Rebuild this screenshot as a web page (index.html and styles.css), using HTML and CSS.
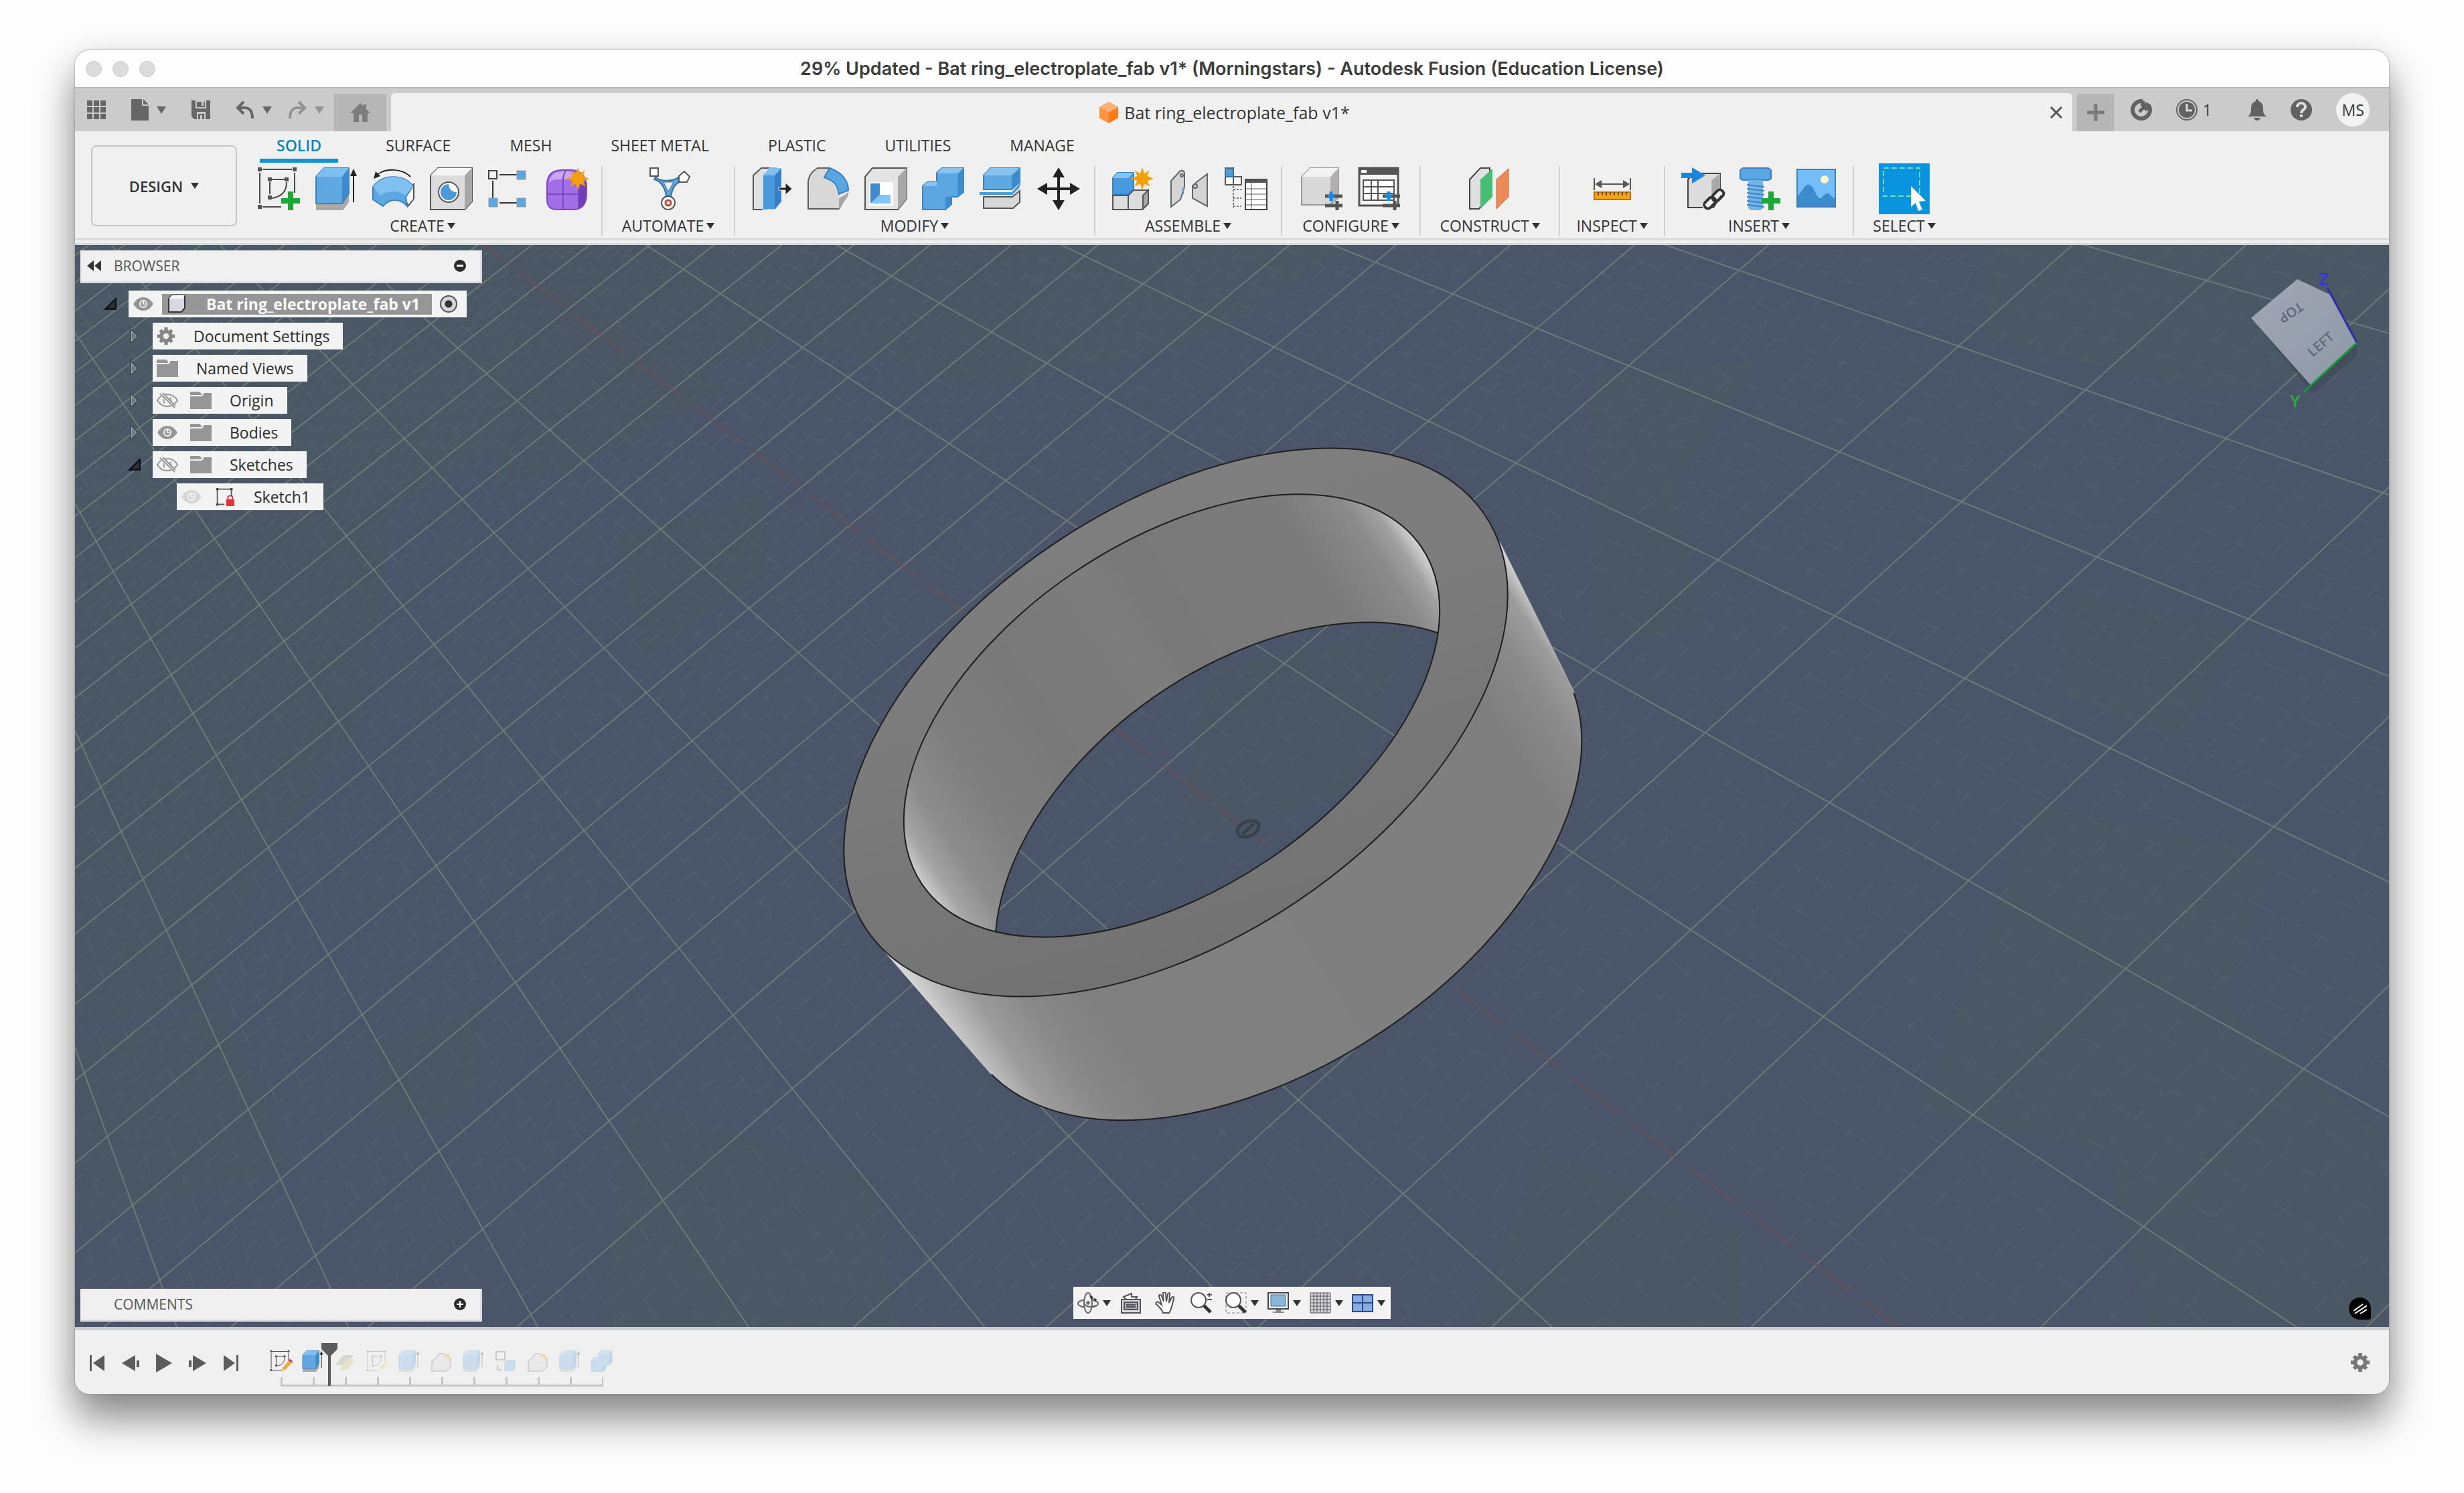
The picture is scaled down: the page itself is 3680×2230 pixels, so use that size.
FILE: index.html
```html
<!DOCTYPE html>
<html lang="en">

<head>
    <meta charset="UTF-8">
    <meta name="viewport" content="width=device-width, initial-scale=1.0">
    <title>Bat ring_electroplate_fab v1* - Autodesk Fusion</title>
    <link rel="stylesheet" href="styles.css">
</head>

<body>
    <!-- shared icons -->
    <svg class="sprites" width="0" height="0" aria-hidden="true">
        <symbol id="eye" viewBox="0 0 32 24">
            <path d="M1 12C6 4 11 2 16 2s10 2 15 10c-5 8-10 10-15 10S6 20 1 12z" fill="#969696" />
            <circle cx="16" cy="12" r="6" fill="#f0f0f0" />
            <circle cx="16" cy="12" r="4" fill="#969696" />
            <path d="M16 8v4h3" stroke="#f0f0f0" stroke-width="2" fill="none" />
        </symbol>
        <symbol id="eye-off" viewBox="0 0 32 24">
            <path d="M1 12C6 4 11 3 16 3s10 1 15 9c-5 8-10 9-15 9S6 20 1 12z" fill="none" stroke="#969696" stroke-width="2" />
            <path d="M12 16a6 6 0 0 1 0-8M20 8a6 6 0 0 1 0 8" fill="none" stroke="#969696" stroke-width="2" />
            <path d="M6 1l22 21" stroke="#f0f0f0" stroke-width="6" />
            <path d="M5 2l22 21M9 1l19 19" stroke="#969696" stroke-width="2" />
        </symbol>
        <symbol id="folder" viewBox="0 0 32 26">
            <path d="M0 0h14l3 3v2H0zM0 7h18l3-5h11v24H0z" fill="#969696" />
        </symbol>
        <symbol id="gear" viewBox="0 0 32 32">
            <g stroke-width="6" stroke="currentColor">
                <path d="M16 1v30M1 16h30M6 6l20 20M26 6L6 26" />
            </g>
            <circle cx="16" cy="16" r="11" fill="currentColor" />
            <circle cx="16" cy="16" r="5" fill="#f0f0f0" />
        </symbol>
        <symbol id="open" viewBox="0 0 20 20">
            <path d="M18 3v14H4z" fill="#2c3336" stroke="#0c0c0e" stroke-width="2" />
        </symbol>
        <symbol id="closed" viewBox="0 0 20 24">
            <path d="M4 2h3l9 10-9 10H4z" fill="#6a777c" stroke="#20282c" stroke-width="1" />
            <path d="M6 4l8 8-8 8z" fill="none" stroke="#a8b4b8" stroke-width="1" />
        </symbol>
        <symbol id="sketch" viewBox="0 0 64 64">
            <path d="M8 3h44M4 8v46M56 8v30M8 59h28" stroke="#4a4a4a" stroke-width="2" fill="none" />
            <path d="M22 18h20M19 22v18M44 22c0 14-8 22-22 24" stroke="#4a4a4a" stroke-width="2" fill="none" />
            <path d="M1 0h6v6H1zM53 0h6v6h-6zM1 56h6v6H1zM16 15h6v6h-6zM41 15h6v6h-6zM16 42h6v6h-6z" fill="#555" />
        </symbol>
        <symbol id="extrude" viewBox="0 0 64 64">
            <path d="M2 52h40l9-12v12l-9 12H2z" fill="#a9a9a9" />
            <path d="M2 14L14 1h37v38L41 54H2z" fill="#60a8e2" stroke="#3a82c0" stroke-width="2" />
            <path d="M2 14L14 1h37L41 14z" fill="#7dbff0" />
            <path d="M41 14L51 1v38L41 54z" fill="#3c8ccd" />
            <path d="M58 12v40" stroke="#222" stroke-width="2" />
            <path d="M58 2l5 11H53z" fill="#222" />
        </symbol>
        <symbol id="fillet" viewBox="0 0 64 64">
            <path d="M2 62V24C2 12 8 6 16 1h18c20 10 27 22 27 38L48 62z" fill="#d8d8d8" stroke="#606060" stroke-width="2" />
            <path d="M48 62c2-20 1-34-22-47l8-14c20 9 28 23 27 39z" fill="#f0f0f0" />
            <path d="M48 40c-2-14-8-20-22-25l8-14c20 7 28 20 28 33z" fill="#58a6e2" stroke="#3a82c0" stroke-width="2" />
            <path d="M48 62V46l13-8v6z" fill="#a8a8a8" />
        </symbol>
        <symbol id="combine" viewBox="0 0 64 64">
            <path d="M1 28l8-7h13V8l8-7h32v36l-9 7H44v11l-9 8H1z" fill="#5ca6e2" stroke="#3a82c0" stroke-width="2" />
            <path d="M22 8l8-7h32l-8 8H22zM1 28l8-7h13v7z" fill="#86c3f2" />
            <path d="M54 9l8-8v36l-9 7zM44 44v11l-9 8V44z" fill="#3c8ccd" />
        </symbol>
        <symbol id="star" viewBox="0 0 32 32">
            <path d="M16 0l3 9 7-5-3 8 9 4-9 3 4 8-8-4-3 9-3-9-8 4 4-8-9-3 9-4-4-8 8 5z" fill="#f5a000" />
        </symbol>
        <symbol id="plus" viewBox="0 0 28 28">
            <path d="M10 0h8v10h10v8H18v10h-8V18H0v-8h10z" fill="#1ea838" />
        </symbol>
        <symbol id="eq" viewBox="0 0 28 32">
            <path d="M0 10h26M0 24h26M18 17v14" stroke="#555" stroke-width="5" />
            <path d="M9 3v14M4 10h10" stroke="#1a8ae8" stroke-width="5" />
        </symbol>
    </svg>

    <main class="window">
        <header class="titlebar">
            <div class="lights"><i></i><i></i><i></i></div>
            <h1>29% Updated - Bat ring_electroplate_fab v1* (Morningstars) - Autodesk Fusion (Education License)</h1>
        </header>

        <div class="appbar">
            <div class="quick">
                <button aria-label="Data panel"><svg width="28" height="28" viewBox="0 0 28 28" fill="#666"><path d="M0 0h8v8H0zM10 0h8v8h-8zM20 0h8v8h-8zM0 10h8v8H0zM10 10h8v8h-8zM20 10h8v8h-8zM0 20h8v8H0zM10 20h8v8h-8zM20 20h8v8h-8z" /></svg></button>
                <button aria-label="File"><svg width="26" height="32" viewBox="0 0 26 32" fill="#666"><path d="M0 0h16v10h10v22H0zM18 0l8 8h-8z" /></svg><span class="caret"></span></button>
                <button aria-label="Save"><svg width="28" height="28" viewBox="0 0 28 28"><path d="M0 0h28v28H4l-4-4z" fill="#666" /><path d="M6 0h16v12H6zM8 17h13v11H8z" fill="#cbcbcb" /><path d="M8 2h12v8H8zM10 20h9v8h-9z" fill="#666" /><path d="M13 22h3v6h-3zM15 2h3v6h-3z" fill="#cbcbcb" /></svg></button>
                <button aria-label="Undo"><svg width="28" height="28" viewBox="0 0 28 28" fill="none" stroke="#666" stroke-width="4"><path d="M12 2L3 11l9 9M3 11h10c9 0 12 6 12 16" /></svg><span class="caret"></span></button>
                <button class="dim" aria-label="Redo"><svg width="28" height="28" viewBox="0 0 28 28" fill="none" stroke="#666" stroke-width="4"><path d="M16 2l9 9-9 9M25 11H15C6 11 3 17 3 27" /></svg><span class="caret"></span></button>
            </div>
            <button class="home" aria-label="Home"><svg width="30" height="28" viewBox="0 0 30 28" fill="#7c7c7c"><path d="M15 0l5 5V2h4v7l6 6h-4v13h-8V17h-5v11H5V15H0z" /></svg></button>
            <div class="doctab">
                <svg width="30" height="32" viewBox="0 0 30 32"><path d="M15 0l14 8v16l-14 8L1 24V8z" fill="#ff7a14" /><path d="M15 0l14 8-14 8L1 8z" fill="#ffb277" /><path d="M1 8l14 8v16L1 24z" fill="#ff9440" /></svg>
                <span>Bat ring_electroplate_fab v1*</span>
                <button class="close" aria-label="Close tab"><svg width="20" height="20" viewBox="0 0 20 20" stroke="#555" stroke-width="3"><path d="M2 2l16 16M18 2L2 18" /></svg></button>
            </div>
            <button class="newtab" aria-label="New design"><svg width="26" height="26" viewBox="0 0 26 26" stroke="#7a7a7a" stroke-width="5"><path d="M13 0v26M0 13h26" /></svg></button>
            <div class="account">
                <button aria-label="Extensions"><svg width="32" height="32" viewBox="0 0 32 32"><circle cx="16" cy="16" r="13" fill="none" stroke="#626262" stroke-width="6" /><path d="M18 0h14v8l-6-1-9 12-6-4 7-8z" fill="#cbcbcb" /><path d="M13 19L26 6M17 11l3-8M21 16l7-4" stroke="#626262" stroke-width="5" /></svg></button>
                <button aria-label="Job status"><svg width="32" height="32" viewBox="0 0 32 32"><circle cx="16" cy="16" r="15" fill="none" stroke="#626262" stroke-width="2" /><circle cx="16" cy="16" r="12" fill="#626262" /><path d="M16 7v10h8" fill="none" stroke="#ddd" stroke-width="3" /></svg><span>1</span></button>
                <button class="bell" aria-label="Notifications"><svg width="28" height="32" viewBox="0 0 28 32" fill="#626262"><path d="M14 0c2 0 2 2 2 3 6 2 7 6 7 12 0 5 1 8 5 11H0c4-3 5-6 5-11 0-6 1-10 7-12 0-1 0-3 2-3zM9 28h10c-1 3-3 4-5 4s-4-1-5-4z" /></svg></button>
                <button aria-label="Help"><svg width="32" height="32" viewBox="0 0 32 32"><circle cx="16" cy="16" r="16" fill="#626262" /><path d="M10 12c0-8 12-8 12 0 0 4-6 4-6 9" fill="none" stroke="#ddd" stroke-width="4" /><path d="M14 23h4v4h-4z" fill="#ddd" /></svg></button>
                <button class="avatar">MS</button>
            </div>
        </div>

        <div class="ribbon">
            <button class="workspace">DESIGN <span class="caret"></span></button>
            <div class="tools">
                <nav class="tabs">
                    <button class="active">SOLID</button>
                    <button>SURFACE</button>
                    <button>MESH</button>
                    <button>SHEET METAL</button>
                    <button>PLASTIC</button>
                    <button>UTILITIES</button>
                    <button>MANAGE</button>
                </nav>
                <div class="groups">
                    <section class="group">
                        <div class="icons">
                            <button aria-label="Create sketch"><svg viewBox="0 0 64 64"><use href="#sketch" /><use href="#plus" x="36" y="36" width="28" height="28" /></svg></button>
                            <button aria-label="Extrude"><svg viewBox="0 0 64 64"><use href="#extrude" /></svg></button>
                            <button aria-label="Revolve"><svg viewBox="0 0 64 64"><path d="M52 32l10-7v22l-8 10-6-10z" fill="#fff" stroke="#555" stroke-width="2" /><path d="M1 29c14-19 45-20 60-1L50 44l2 14c-10-12-26-12-36 0L1 48z" fill="#5ca6e2" stroke="#3a82c0" stroke-width="2" /><path d="M1 29c14-19 45-20 60-1L50 42c-10-8-26-8-38 0z" fill="#80c0f0" /><path d="M57 14C44 1 20 1 7 11" fill="none" stroke="#222" stroke-width="2" /><path d="M2 17l3-11 7 7z" fill="#222" /></svg></button>
                            <button aria-label="Hole"><svg viewBox="0 0 64 64"><path d="M1 12L12 1h51v50L52 63H1z" fill="#dcdcdc" stroke="#555" stroke-width="2" /><path d="M1 12L12 1h51L52 12z" fill="#f4f4f4" /><path d="M52 12L63 1v50L52 63z" fill="#a8a8a8" /><circle cx="28" cy="37" r="15" fill="#fff" stroke="#555" stroke-width="2" /><path d="M28 25a12 12 0 1 0 12 12c-7 0-12-5-12-12z" fill="#4b9ade" /></svg></button>
                            <button aria-label="Pattern"><svg viewBox="0 0 64 64"><path d="M18 11h26M8 20v26M18 53h26" stroke="#333" stroke-width="2" /><path d="M2 5h12v12H2z" fill="#f4f4f4" stroke="#444" stroke-width="2" /><path d="M44 5h13v13H44zM2 46h13v13H2zM44 46h13v13H44z" fill="#5ca6e2" stroke="#999" stroke-width="1" /></svg></button>
                            <button aria-label="Create form"><svg viewBox="0 0 64 64"><path d="M3 26C3 8 14 4 26 4h14c12 0 22 10 22 24v12c0 16-8 23-20 23H18C8 63 3 58 3 48z" fill="#a26fe8" stroke="#7c48c0" stroke-width="2" /><path d="M6 22C8 10 16 6 26 6h12l6 12H14z" fill="#c9a6f6" /><path d="M52 24l9-2v24c-1 10-8 15-12 16z" fill="#7040b8" /><path d="M4 40h46M27 20v42M50 20v36M27 20c0-8 2-12 4-15" fill="none" stroke="#7c48c0" stroke-width="2" /><use href="#star" x="32" y="0" width="34" height="34" /></svg></button>
                        </div>
                        <button class="label">CREATE<span class="caret"></span></button>
                    </section>
                    <section class="group">
                        <div class="icons">
                            <button aria-label="Automated modeling"><svg viewBox="0 0 64 64"><path d="M13 14c6 8 28 8 38-2l4 8c-10 2-15 6-19 22l1 14h-9l1-14C26 26 19 20 11 18z" fill="#5ca6e2" stroke="#3a6f9c" stroke-width="2" /><path d="M25 22h15l-8 14z" fill="#f0f0f0" stroke="#3a6f9c" stroke-width="1" /><path d="M5 1h12v12H5zM56 6l8 8-4 8H48v-9z" fill="#fff" stroke="#555" stroke-width="2" /><circle cx="32" cy="53" r="10" fill="#fff" stroke="#555" stroke-width="2" /><circle cx="32" cy="53" r="4" fill="#fff" stroke="#b0503c" stroke-width="3" /></svg></button>
                        </div>
                        <button class="label">AUTOMATE<span class="caret"></span></button>
                    </section>
                    <section class="group">
                        <div class="icons">
                            <button aria-label="Press pull"><svg viewBox="0 0 64 64"><path d="M6 12L18 1h22v50L26 63H6z" fill="#e0e0e0" stroke="#555" stroke-width="2" /><path d="M20 12L30 1h18v50L38 63H20z" fill="#4b9ade" stroke="#fff" stroke-width="1" /><path d="M38 12L48 1v50L38 63z" fill="#3580c4" /><path d="M20 12L30 1h18L38 12z" fill="#7dbff0" /><path d="M44 30h10v-7l10 9-10 9v-7H44z" fill="#222" stroke="#f0f0f0" stroke-width="1" /></svg></button>
                            <button aria-label="Fillet"><svg viewBox="0 0 64 64"><use href="#fillet" /></svg></button>
                            <button aria-label="Shell"><svg viewBox="0 0 64 64"><path d="M1 14L12 1h51v46L50 63H1z" fill="#e4e4e4" stroke="#555" stroke-width="2" /><path d="M50 14L63 1v46L50 63z" fill="#a8a8a8" /><path d="M7 22h36v35H7z" fill="#fff" /><path d="M9 24h14v17L9 54z" fill="#3c8ccd" /><path d="M23 41h16v13H9z" fill="#80c4f8" /></svg></button>
                            <button aria-label="Combine"><svg viewBox="0 0 64 64"><use href="#combine" /></svg></button>
                            <button aria-label="Split body"><svg viewBox="0 0 64 64"><path d="M6 12L16 1h44v21L48 33H6z" fill="#60a8e2" stroke="#3a82c0" stroke-width="2" /><path d="M6 12L16 1h44L48 12z" fill="#86c3f2" /><path d="M48 12L60 1v21L48 33z" fill="#3c8ccd" /><path d="M0 37h48l14-15-3 9-10 10H0z" fill="#4b9ade" /><path d="M6 44h43l11-9v17L50 61H6z" fill="#d8d8d8" stroke="#555" stroke-width="2" /></svg></button>
                            <button aria-label="Move"><svg viewBox="0 0 64 64"><path d="M32 10v44M10 32h44" stroke="#222" stroke-width="4" /><path d="M32 0l9 15H23zM32 64l9-15H23zM0 32l15-9v18zM64 32l-15-9v18z" fill="#222" /></svg></button>
                        </div>
                        <button class="label">MODIFY<span class="caret"></span></button>
                    </section>
                    <section class="group">
                        <div class="icons">
                            <button aria-label="New component"><svg viewBox="0 0 64 64"><path d="M5 42h23l8-8h22v20l-9 9H5z" fill="#dcdcdc" stroke="#555" stroke-width="2" /><path d="M28 42v20M50 42l8-8v20l-8 8z" fill="#a8a8a8" stroke="#555" stroke-width="2" /><path d="M5 16l7-8h24v24l-8 8H5z" fill="#4b9ade" stroke="#3a82c0" stroke-width="2" /><path d="M5 16l7-8h24l-8 8z" fill="#86c3f2" /><use href="#star" x="32" y="0" width="34" height="34" /></svg></button>
                            <button aria-label="Joint"><svg viewBox="0 0 64 64" fill="#d4d4d4" stroke="#666" stroke-width="2"><path d="M6 20L18 7c3-4 8-2 8 2v20L20 48 6 59zM60 10v48L38 46V28l6-6z" /><circle cx="22" cy="12" r="2" /><circle cx="42" cy="28" r="3" /><path d="M24 30v10" stroke="#4b9ade" /></svg></button>
                            <button aria-label="Parts list"><svg viewBox="0 0 64 64"><path d="M1 14h24v12H1zM13 14v12" fill="#fff" stroke="#555" stroke-width="2" /><path d="M1 1h12v13H1z" fill="#4b9ade" stroke="#3a6f9c" stroke-width="2" /><path d="M13 28v32M13 33h12M13 46h12M13 58h12" stroke="#777" stroke-width="2" stroke-dasharray="3 2" /><path d="M31 18h32v45H31z" fill="#fff" stroke="#444" stroke-width="2" /><path d="M31 18h32v5H31z" fill="#555" /><path d="M31 32h32M31 40h32M31 48h32M31 56h32M40 23v40" stroke="#555" stroke-width="1" /></svg></button>
                        </div>
                        <button class="label">ASSEMBLE<span class="caret"></span></button>
                    </section>
                    <section class="group">
                        <div class="icons">
                            <button aria-label="Configure"><svg viewBox="0 0 64 64"><path d="M1 14L14 1h42v44L44 56H1z" fill="#d8d8d8" stroke="#999" stroke-width="2" /><path d="M1 14L14 1h42L44 14z" fill="#f2f2f2" /><path d="M44 14L56 1v44L44 56z" fill="#b0b0b0" /><use href="#eq" x="36" y="33" width="28" height="32" /></svg></button>
                            <button aria-label="Configuration table"><svg viewBox="0 0 64 64"><path d="M1 1h58v56H1z" fill="#f4f4f4" stroke="#555" stroke-width="3" /><path d="M1 1h58v10H1z" fill="#555" /><path d="M4 4h8v4H4z" fill="#fff" /><path d="M7 19h46v30H7zM7 29h46M7 39h46M19 19v30M29 19v30" fill="#fff" stroke="#555" stroke-width="2" /><use href="#eq" x="36" y="33" width="28" height="32" /></svg></button>
                        </div>
                        <button class="label">CONFIGURE<span class="caret"></span></button>
                    </section>
                    <section class="group">
                        <div class="icons">
                            <button aria-label="Offset plane"><svg viewBox="0 0 64 64"><path d="M2 18L18 1h14v36L16 62H2z" fill="#e0e0e0" stroke="#444" stroke-width="2" /><path d="M18 18L36 2v42L18 62z" fill="#46bf74" /><path d="M42 18L60 2v42L42 62z" fill="#ec8a58" stroke="#c86c3c" stroke-width="1" /></svg></button>
                        </div>
                        <button class="label">CONSTRUCT<span class="caret"></span></button>
                    </section>
                    <section class="group">
                        <div class="icons">
                            <button aria-label="Measure"><svg viewBox="0 0 64 64"><path d="M5 16v18M59 16v18M8 25h48" stroke="#555" stroke-width="2" /><path d="M6 25l10-6v12zM58 25l-10-6v12z" fill="#555" /><path d="M5 37h54v11H5z" fill="#f5a41a" stroke="#b87408" stroke-width="2" /><path d="M11 37v5M17 37v4M23 37v5M29 37v4M35 37v5M41 37v4M47 37v5M53 37v4" stroke="#6a4a10" stroke-width="2" /></svg></button>
                        </div>
                        <button class="label">INSPECT<span class="caret"></span></button>
                    </section>
                    <section class="group">
                        <div class="icons">
                            <button aria-label="Insert derive"><svg viewBox="0 0 64 64"><path d="M12 18l9-9h39v36L50 60H12z" fill="#dcdcdc" stroke="#444" stroke-width="2" /><path d="M47 20L60 9v36L48 60z" fill="#a8a8a8" /><path d="M2 8h16V0l20 12-20 12v-8H2z" fill="#1c86dc" /><g fill="none" stroke="#f0f0f0" stroke-width="9" stroke-linecap="round"><path d="M46 50L58 38M38 58l12-12" /></g><g fill="none" stroke="#333" stroke-width="4"><rect x="47" y="37" width="19" height="11" rx="5" transform="rotate(-45 56 42)" /><rect x="35" y="48" width="19" height="11" rx="5" transform="rotate(-45 44 53)" /></g></svg></button>
                            <button aria-label="Insert fastener"><svg viewBox="0 0 64 64"><path d="M4 4l4-3h38l4 3v13l-4 2H8l-4-2z" fill="#58a6e2" stroke="#3a82c0" stroke-width="2" /><path d="M16 19h22v42l-4 3H20l-4-3z" fill="#70b4e8" /><path d="M14 26l26 3M14 32l26 3M14 38l26 3M14 44l26 3M14 50l26 3M14 56l26 3" stroke="#3a82c0" stroke-width="2" /><use href="#plus" x="36" y="36" width="28" height="28" /></svg></button>
                            <button aria-label="Insert image"><svg viewBox="0 0 64 64"><path d="M3 3h57v56H3z" fill="#74bdf8" stroke="#3a82c0" stroke-width="2" /><circle cx="44" cy="18" r="6" fill="#fff4c4" /><path d="M4 43c8-10 12-20 18-17s10 18 14 20 9-10 14-7l9 8v11H4z" fill="#3c8ccd" /></svg></button>
                        </div>
                        <button class="label">INSERT<span class="caret"></span></button>
                    </section>
                    <section class="group">
                        <div class="icons">
                            <button class="selected" aria-label="Select"><svg viewBox="0 0 76 76"><path d="M7 7h54v42H7z" fill="none" stroke="#6fe0c0" stroke-width="2" stroke-dasharray="8 4" /><path d="M48 34l22 22-10 1 5 12-6 2-4-12-7 6z" fill="#fff" /></svg></button>
                        </div>
                        <button class="label">SELECT<span class="caret"></span></button>
                    </section>
                </div>
            </div>
        </div>

        <div class="viewport">
            <svg class="scene" viewBox="112 366 3456 1616" preserveAspectRatio="xMidYMid slice">
                <defs>
                    <linearGradient id="side" gradientUnits="userSpaceOnUse" x1="1293" y1="1385" x2="2219" y2="773">
                        <stop offset="0" stop-color="#e0e0e0" />
                        <stop offset=".03" stop-color="#c0c0c0" />
                        <stop offset=".07" stop-color="#9c9c9c" />
                        <stop offset=".13" stop-color="#888888" />
                        <stop offset=".2" stop-color="#808080" />
                        <stop offset=".86" stop-color="#7f7f7f" />
                        <stop offset=".93" stop-color="#8a8a8a" />
                        <stop offset=".97" stop-color="#9c9c9c" />
                        <stop offset="1" stop-color="#dcdcdc" />
                    </linearGradient>
                    <linearGradient id="face" gradientUnits="userSpaceOnUse" x1="1660" y1="740" x2="1860" y2="1400">
                        <stop offset="0" stop-color="#7f7f7f" />
                        <stop offset=".5" stop-color="#7a7a7a" />
                        <stop offset="1" stop-color="#727272" />
                    </linearGradient>
                    <linearGradient id="inside" gradientUnits="userSpaceOnUse" x1="1375" y1="1317" x2="2125" y2="821">
                        <stop offset="0" stop-color="#cccccc" />
                        <stop offset=".03" stop-color="#a4a4a4" />
                        <stop offset=".08" stop-color="#8c8c8c" />
                        <stop offset=".16" stop-color="#808080" />
                        <stop offset=".3" stop-color="#797979" />
                        <stop offset=".46" stop-color="#7b7b7b" />
                        <stop offset=".5" stop-color="#7e7e7e" />
                        <stop offset=".56" stop-color="#797979" />
                        <stop offset=".84" stop-color="#7b7b7b" />
                        <stop offset=".93" stop-color="#8a8a8a" />
                        <stop offset=".97" stop-color="#a0a0a0" />
                        <stop offset="1" stop-color="#d4d4d4" />
                    </linearGradient>
                    <linearGradient id="cube" x1="0" y1="0" x2="1" y2="1">
                        <stop offset="0" stop-color="#a2a6b4" />
                        <stop offset="1" stop-color="#8e99a8" />
                    </linearGradient>
                    <clipPath id="topEdge">
                        <ellipse cx="1756" cy="1079" rx="556" ry="323" transform="rotate(-33.8 1756 1079)" />
                    </clipPath>
                    <clipPath id="topHole">
                        <ellipse cx="1750" cy="1069" rx="450" ry="259" transform="rotate(-34 1750 1069)" />
                    </clipPath>
                    <clipPath id="bottomEdge">
                        <ellipse cx="1895" cy="1287" rx="524" ry="305" transform="rotate(-33.8 1895 1287)" />
                    </clipPath>
                    <mask id="hole" maskUnits="userSpaceOnUse" x="1200" y="600" width="1300" height="1200">
                        <rect x="1200" y="600" width="1300" height="1200" fill="#fff" />
                        <g clip-path="url(#topHole)">
                            <ellipse cx="1887" cy="1277" rx="446" ry="287" transform="rotate(-35 1887 1277)" fill="#000" />
                        </g>
                    </mask>
                </defs>

                <rect x="0" y="0" width="3680" height="2230" fill="#4a556a" />
                <g fill="#4b5861" opacity=".6">
                    <path d="M112 366h1200l-180 160-330 110-210 120-60 340-120 160-110 240-190 40zM760 560l240-40 80 60-220 120-120 20zM920 800l220-60 0 120-180 120z" />
                    <path d="M820 366h1200l-240 150-300 60-260-60zM2380 560l240-20-120 180 40 220-160 20zM2960 366h608v180l-260 40-340-80z" />
                    <path d="M3080 880l260 60-80 160-180-60zM3040 1200l360 80-80 220 248 200v280h-360l-60-260-280-60zM560 1560l160-60-20 160-140 20zM940 1640l360 120 40 222H900zM112 1560l220-60 100 240-320 90z" />
                    <path d="M1800 1000l300-60-80 240-260 80zM2300 1720l300 120v142h-400z" />
                </g>
                <g id="grid"></g>

                <!-- origin marker -->
                <g fill="none" stroke="#35444a" stroke-width="5">
                    <ellipse cx="1864" cy="1238" rx="17" ry="11" transform="rotate(-25 1864 1238)" />
                    <path d="M1855 1246l18-16" />
                </g>

                <!-- ring body -->
                <g mask="url(#hole)">
                    <rect x="1200" y="600" width="1300" height="1200" clip-path="url(#bottomEdge)" fill="url(#side)" />
                    <ellipse cx="1895" cy="1287" rx="524" ry="305" transform="rotate(-33.8 1895 1287)" fill="none" stroke="#1e1e1e" stroke-width="2" />
                    <path d="M1317 1417L1480 1605L2352 1034L2240 809z" fill="url(#side)" />
                    <rect x="1200" y="600" width="1300" height="1200" clip-path="url(#topEdge)" fill="url(#face)" />
                    <ellipse cx="1756" cy="1079" rx="556" ry="323" transform="rotate(-33.8 1756 1079)" fill="none" stroke="#1e1e1e" stroke-width="2" />
                    <rect x="1200" y="600" width="1300" height="1200" clip-path="url(#topHole)" fill="url(#inside)" />
                </g>
                <ellipse cx="1750" cy="1069" rx="450" ry="259" transform="rotate(-34 1750 1069)" fill="none" stroke="#1e1e1e" stroke-width="2" />
                <g clip-path="url(#topHole)">
                    <ellipse cx="1887" cy="1277" rx="446" ry="287" transform="rotate(-35 1887 1277)" fill="none" stroke="#1e1e1e" stroke-width="2" />
                </g>

                <!-- view cube -->
                <g class="cube">
                    <path d="M3362 475l89 100 69-63v20l-66 56z" fill="#3c4656" opacity=".5" />
                    <path d="M3431 417l51 24 38 71-69 63-89-100z" fill="url(#cube)" />
                    <path d="M3476 430l44 82" stroke="#2c2ca8" stroke-width="3" />
                    <path d="M3520 512l-80 74" stroke="#129a34" stroke-width="3" />
                    <text class="axis-z" x="3463" y="426">Z</text>
                    <text class="axis-y" x="3420" y="608">Y</text>
                    <text class="face" transform="translate(3454 534) rotate(-41)">LEFT</text>
                    <text class="face" transform="translate(3434 450) rotate(146)">TOP</text>
                </g>
            </svg>

            <aside class="browser">
                <div class="panel">
                    <button aria-label="Collapse"><svg width="22" height="16" viewBox="0 0 22 16" fill="#333"><path d="M10 0v16L0 8zM21 0v16L11 8z" /></svg></button>
                    <h2>BROWSER</h2>
                    <button aria-label="Hide panel"><svg width="18" height="18" viewBox="0 0 18 18"><circle cx="9" cy="9" r="9" fill="#2c2c2c" /><path d="M4 9h10" stroke="#fff" stroke-width="3" /></svg></button>
                </div>
                <ul class="tree">
                    <li class="root">
                        <svg class="arrow"><use href="#open" /></svg>
                        <div class="item">
                            <svg class="eye"><use href="#eye" /></svg>
                            <span class="name"><svg width="28" height="28" viewBox="0 0 28 28"><path d="M2 6l5-5h19v19l-5 6H2z" fill="#d8d8e0" stroke="#333" stroke-width="2" /><path d="M2 6l5-5h19l-5 5z" fill="#f8f8fc" /></svg>Bat ring_electroplate_fab v1</span>
                            <input type="radio" name="active" aria-label="Activate Bat ring_electroplate_fab v1" checked>
                        </div>
                    </li>
                    <li>
                        <svg class="arrow"><use href="#closed" /></svg>
                        <div class="item"><svg class="gear"><use href="#gear" /></svg><span>Document Settings</span></div>
                    </li>
                    <li>
                        <svg class="arrow"><use href="#closed" /></svg>
                        <div class="item"><svg class="folder"><use href="#folder" /></svg><span>Named Views</span></div>
                    </li>
                    <li>
                        <svg class="arrow"><use href="#closed" /></svg>
                        <div class="item"><svg class="eye"><use href="#eye-off" /></svg><svg class="folder"><use href="#folder" /></svg><span>Origin</span></div>
                    </li>
                    <li>
                        <svg class="arrow"><use href="#closed" /></svg>
                        <div class="item"><svg class="eye"><use href="#eye" /></svg><svg class="folder"><use href="#folder" /></svg><span>Bodies</span></div>
                    </li>
                    <li>
                        <svg class="arrow"><use href="#open" /></svg>
                        <div class="item"><svg class="eye"><use href="#eye-off" /></svg><svg class="folder"><use href="#folder" /></svg><span>Sketches</span></div>
                    </li>
                    <li class="leaf">
                        <div class="item">
                            <svg class="eye faint"><use href="#eye" /></svg>
                            <svg class="folder" viewBox="0 0 32 32"><path d="M5 3h20M3 5v22M27 5v10M5 29h10" stroke="#555" stroke-width="2" /><path d="M1 1h4v4H1zM25 1h4v4h-4zM1 27h4v4H1z" fill="#444" /><path d="M18 20h14v12H18z" fill="#e0363c" /><path d="M21 20v-3c0-4 8-4 8 0v3" fill="none" stroke="#c83040" stroke-width="2" /></svg>
                            <span>Sketch1</span>
                        </div>
                    </li>
                </ul>
            </aside>

            <div class="panel comments">
                <h2>COMMENTS</h2>
                <button aria-label="Show comments"><svg width="18" height="18" viewBox="0 0 18 18"><circle cx="9" cy="9" r="9" fill="#2c2c2c" /><path d="M4 9h10M9 4v10" stroke="#fff" stroke-width="2" /></svg></button>
            </div>

            <div class="navbar">
                <button aria-label="Orbit"><svg viewBox="0 0 32 32" fill="none" stroke="#666" stroke-width="2"><ellipse cx="16" cy="17" rx="15" ry="6" /><ellipse cx="16" cy="16" rx="6" ry="15" fill="#f0f0f0" /><path d="M10 17c4 6 10 6 18 3M16 13v6M13 16h6" /><path d="M18 5l6 2-3 5zM24 9l5 1-2 5z" fill="#333" stroke="none" /></svg><span class="caret"></span></button>
                <button aria-label="Look at"><svg viewBox="0 0 32 32" fill="none" stroke="#555" stroke-width="2"><path d="M3 11h28v20H3z" fill="#ddd" /><path d="M7 15h20v11H7z" fill="#a8a8b8" /><path d="M10 19h14M10 22h14M6 7l12-5v5h8l-2 4H10z" /></svg></button>
                <button aria-label="Pan"><svg viewBox="0 0 32 32" fill="#fff" stroke="#555" stroke-width="2"><path d="M12 31c-1-5-5-8-10-13-2-3 1-4 3-3l5 4L6 6c0-3 3-3 4 0l3 8-1-12c0-3 3-3 4 0l1 12 2-11c1-3 4-2 3 1l-1 12 4-8c2-2 4-1 3 2-2 7-3 15-7 21z" /></svg></button>
                <button aria-label="Zoom"><svg viewBox="0 0 32 32" fill="none" stroke="#555"><path d="M20 20l10 10" stroke="#333" stroke-width="5" /><circle cx="12" cy="12" r="11" fill="#fff" stroke-width="2" /><path d="M25 4h7M28 1v6M25 11h7" stroke-width="2" /></svg></button>
                <button aria-label="Fit"><svg viewBox="0 0 32 32" fill="none" stroke="#555"><path d="M1 1h30v30H1z" stroke-dasharray="4 3" stroke="#777" /><path d="M20 20l10 10" stroke="#333" stroke-width="5" /><circle cx="12" cy="12" r="11" fill="#fff" stroke-width="2" /></svg><span class="caret"></span></button>
                <button aria-label="Display settings"><svg viewBox="0 0 32 32"><path d="M1 1h30v24H1z" fill="#fff" stroke="#444" stroke-width="2" /><path d="M5 4h22v17H5z" fill="#8ab6d8" stroke="#3c6c90" stroke-width="1" /><path d="M13 26h7v3h5v2H8v-2h5z" fill="#888" /></svg><span class="caret"></span></button>
                <button aria-label="Grid and snaps"><svg viewBox="0 0 32 32"><path d="M1 1h30v30H1z" fill="#d4d4dc" /><path d="M1 1h30v30H1zM1 6h30M1 11h30M1 16h30M1 21h30M1 26h30M6 1v30M11 1v30M16 1v30M21 1v30M26 1v30" fill="none" stroke="#555" stroke-width="1" /></svg><span class="caret"></span></button>
                <button aria-label="Viewports"><svg viewBox="0 0 32 32"><path d="M1 4h30v25H1z" fill="#86ade4" stroke="#2c4c88" stroke-width="2" /><path d="M16 4v25M1 16h30" stroke="#2c4c88" stroke-width="2" /></svg><span class="caret"></span></button>
            </div>

            <button class="assistant" aria-label="Assistant"><svg width="20" height="16" viewBox="0 0 20 16" stroke="#fff" stroke-width="2"><path d="M0 11L14 1M2 15L20 3M10 15l10-6" /></svg></button>
        </div>

        <footer class="footer">
            <div class="playback">
                <button aria-label="First"><svg viewBox="0 0 26 24"><path d="M2 0h3v24H2zM24 0v24L7 12z" /></svg></button>
                <button aria-label="Back"><svg viewBox="0 0 26 24"><path d="M20 0v24L0 12zM22 8h4v10h-4z" /></svg></button>
                <button class="play" aria-label="Play"><svg viewBox="0 0 26 28"><path d="M1 0l24 14L1 28z" /></svg></button>
                <button aria-label="Forward"><svg viewBox="0 0 26 24"><path d="M6 0v24l20-12zM0 8h4v10H0z" /></svg></button>
                <button aria-label="Last"><svg viewBox="0 0 26 24"><path d="M2 0v24l17-12zM21 0h3v24h-3z" /></svg></button>
            </div>
            <div class="timeline">
                <div class="features">
                    <button aria-label="Sketch1"><svg viewBox="0 0 64 64"><use href="#sketch" /><path d="M36 62l4-12 16-20 9 8-18 19z" fill="#f5a83c" /><path d="M56 30l9 8 3-6-8-7z" fill="#d8404c" /></svg></button>
                    <button aria-label="Extrude1"><svg viewBox="0 0 64 64"><use href="#extrude" /></svg></button>
                    <button class="off" aria-label="Plane1"><svg viewBox="0 0 64 64"><path d="M4 44L28 14h30L34 44z" fill="#888878" /><path d="M14 58l24-32h24L40 58z" fill="#c8bc50" /></svg></button>
                    <button class="off" aria-label="Sketch2"><svg viewBox="0 0 64 64"><use href="#sketch" /><path d="M38 60l4-12 14-14 9 8-16 15z" fill="#e8d860" /></svg></button>
                    <button class="off" aria-label="Extrude2"><svg viewBox="0 0 64 64"><use href="#extrude" /></svg></button>
                    <button class="off" aria-label="Fillet1"><svg viewBox="0 0 64 64"><path d="M4 62V34L26 10h14l20 14v24L46 62z" fill="#d8d8d8" stroke="#555" stroke-width="3" /><path d="M28 10h30v28c-4-14-14-22-30-28z" fill="#f0a020" /></svg></button>
                    <button class="off" aria-label="Extrude3"><svg viewBox="0 0 64 64"><use href="#extrude" /></svg></button>
                    <button class="off" aria-label="Pattern1"><svg viewBox="0 0 64 64"><path d="M4 4h26v24H4zM8 44v14h12" fill="none" stroke="#555" stroke-width="4" /><path d="M28 36l8-8h26v26l-8 8H28z" fill="#5ca6e2" /></svg></button>
                    <button class="off" aria-label="Fillet2"><svg viewBox="0 0 64 64"><path d="M4 62V34L26 10h14l20 14v24L46 62z" fill="#d8d8d8" stroke="#555" stroke-width="3" /><path d="M28 10h30v28c-4-14-14-22-30-28z" fill="#f0a020" /></svg></button>
                    <button class="off" aria-label="Extrude4"><svg viewBox="0 0 64 64"><use href="#extrude" /></svg></button>
                    <button class="off" aria-label="Combine1"><svg viewBox="0 0 64 64"><use href="#combine" /></svg></button>
                </div>
                <div class="track"></div>
                <svg class="marker" width="24" height="64" viewBox="0 0 24 64"><path d="M0 0h24v9L14 19v45h-4V19L0 9z" fill="#5c5c5c" /></svg>
            </div>
            <button class="settings" aria-label="Timeline settings"><svg width="30" height="30"><use href="#gear" /></svg></button>
        </footer>
    </main>
    <script src="grid.js"></script>
</body>

</html>
```
FILE: styles.css
```css
* {
    box-sizing: border-box;
}

body {
    margin: 0;
    padding: 75px 112px 148px;
    height: 100vh;
    min-height: 900px;
    background-color: #fdfdfd;
    font-family: "Open Sans", "Noto Sans", sans-serif;
    font-size: 23px;
    line-height: 30px;
    color: #333;
}

button {
    display: flex;
    align-items: center;
    justify-content: center;
    margin: 0;
    padding: 0;
    border: none;
    background: none;
    font: inherit;
    color: inherit;
}

svg {
    display: block;
    flex: none;
}

h1, h2, ul {
    margin: 0;
    padding: 0;
    font-weight: 400;
    list-style: none;
}

.sprites {
    position: absolute;
}

.caret {
    border: 6px solid transparent;
    border-top: 9px solid #333;
    border-bottom: none;
}

.window {
    display: flex;
    flex-direction: column;
    height: 100%;
    overflow: hidden;
    border-radius: 22px;
    background-color: #f0f0f0;
    box-shadow: 0 0 3px #888, 0 40px 60px rgba(0, 0, 0, .4), 0 10px 50px rgba(0, 0, 0, .14);
}

/* title bar */

.titlebar {
    display: grid;
    grid-template-columns: 1fr auto 1fr;
    align-items: center;
    height: 57px;
    border-bottom: 2px solid #b8b8b8;
    background-color: #fefefe;
}

.titlebar h1 {
    font-family: Inter, sans-serif;
    font-size: 27px;
    font-weight: 600;
    color: #3c3c3c;
}

.lights {
    display: flex;
    gap: 16px;
    padding-left: 16px;
}

.lights i {
    width: 24px;
    height: 24px;
    border: 1px solid #c8c8c8;
    border-radius: 50%;
    background-color: #dcdcdc;
}

/* quick access and document tab */

.appbar {
    display: flex;
    align-items: flex-end;
    height: 64px;
    background-color: #cbcbcb;
}

.quick {
    display: flex;
    align-items: center;
    gap: 38px;
    width: 387px;
    height: 64px;
    padding-left: 18px;
}

.quick button {
    gap: 12px;
}

.quick .caret {
    border-width: 7px;
    border-top-width: 11px;
    border-bottom: none;
    border-top-color: #666;
}

.quick button + button + button + button {
    margin-right: -14px;
}

.dim {
    opacity: .55;
}

.home, .newtab {
    width: 78px;
    height: 56px;
    margin-right: 7px;
    background-color: #b6b6b6;
}

.newtab {
    width: 55px;
    margin: 0 0 0 7px;
}

.doctab {
    display: flex;
    flex: 1;
    align-items: center;
    justify-content: center;
    gap: 8px;
    height: 57px;
    padding: 0 14px 0 20px;
    border-radius: 6px 6px 0 0;
    background-color: #f0f0f0;
    font-size: 25px;
}

.doctab svg:first-child {
    margin-left: auto;
}

.doctab .close {
    margin-left: auto;
}

.account {
    display: flex;
    align-items: center;
    gap: 36px;
    width: 411px;
    height: 64px;
    padding-left: 25px;
}

.account button {
    gap: 8px;
}

.account .bell {
    margin-left: 18px;
}

.account .avatar {
    width: 50px;
    height: 50px;
    border-radius: 50%;
    background-color: #f2f2f2;
}

/* ribbon */

.ribbon {
    display: flex;
    height: 170px;
    padding: 0 24px;
    border-bottom: 10px double #d8d8d8;
}

.workspace {
    gap: 12px;
    width: 218px;
    height: 121px;
    margin-top: 21px;
    border: 2px solid #c6c6c6;
    border-radius: 8px;
    font-size: 22px;
    font-weight: 600;
}

.tabs {
    display: flex;
    gap: 38px;
    height: 47px;
    padding-left: 34px;
}

.tabs button {
    padding: 0 25px;
    border-bottom: 6px solid transparent;
}

.tabs .active {
    margin-right: 8px;
    border-bottom-color: #0a98c8;
    color: #0a84c0;
    font-weight: 600;
}

.groups {
    display: grid;
    grid-template-columns: 546px 198px 538px 279px 207px 208px 157px 282px 150px;
    margin-top: 5px;
}

.group {
    display: flex;
    flex-direction: column;
    align-items: center;
    height: 104px;
    border-right: 2px solid #d0d0d0;
}

.group:first-child {
    padding-left: 10px;
}

.group:last-child {
    border-right: none;
}

.icons {
    display: flex;
    align-items: center;
    gap: 22px;
    height: 68px;
}

.icons svg {
    width: 64px;
    height: 64px;
    overflow: visible;
}

.icons .selected svg {
    width: 76px;
    height: 76px;
    background-color: #0a94e0;
}

.label {
    gap: 4px;
    margin-top: 6px;
}

/* viewport */

.viewport {
    position: relative;
    flex: 1;
    overflow: hidden;
    background-color: #4a556b;
}

.scene {
    position: absolute;
    width: 100%;
    height: 100%;
}

.major {
    fill: none;
    stroke: #76867a;
    stroke-width: 2;
    opacity: .8;
}

.minor {
    fill: none;
    stroke: #67767c;
    stroke-width: 2;
    stroke-dasharray: 16 22 30 26;
    opacity: .26;
}

.axis {
    fill: none;
    stroke: #6a4e56;
    stroke-width: 4;
    stroke-dasharray: 90 20;
    opacity: .6;
}

.cube text {
    font-family: "Open Sans", sans-serif;
    font-size: 26px;
    font-weight: 600;
}

.cube .axis-z {
    fill: #3434e0;
}

.cube .axis-y {
    fill: #2ca83c;
}

.cube .face {
    font-size: 20px;
    fill: #5c6878;
}

.browser {
    position: absolute;
    top: 8px;
    left: 8px;
    width: 600px;
}

.panel {
    display: flex;
    align-items: center;
    height: 49px;
    padding: 0 21px 0 10px;
    border-right: 3px solid #dcdce4;
    border-bottom: 3px solid #dcdce4;
    background-color: #f0f0f0;
}

.panel h2 {
    flex: 1;
    padding-left: 18px;
    font-size: 21px;
    color: #555;
}

.comments {
    position: absolute;
    bottom: 8px;
    left: 8px;
    width: 600px;
}

.comments h2 {
    padding-left: 40px;
}

.tree {
    display: flex;
    flex-direction: column;
    gap: 8px;
    padding: 11px 0 0 68px;
    color: #2c2c2c;
}

.tree li {
    display: flex;
    align-items: center;
    gap: 16px;
}

.tree .root {
    margin-left: -36px;
}

.tree .leaf {
    padding-left: 76px;
}

.item {
    display: flex;
    align-items: center;
    height: 40px;
    padding: 0 20px 0 6px;
    background-color: #f2f3f3;
}

.item span {
    padding-left: 27px;
}

.arrow {
    width: 24px;
    height: 22px;
}

.eye {
    width: 32px;
    height: 24px;
}

.faint {
    opacity: .3;
}

.folder {
    width: 32px;
    height: 28px;
}

.eye + .folder {
    margin-left: 18px;
}

.gear {
    width: 28px;
    height: 28px;
    color: #858585;
}

.root .item {
    gap: 12px;
    padding-right: 14px;
}

.root .name {
    display: flex;
    align-items: center;
    gap: 30px;
    height: 31px;
    padding: 0 18px 0 8px;
    background-color: #969696;
    font-weight: 700;
    color: #fff;
}

.root input {
    appearance: none;
    width: 26px;
    height: 26px;
    margin: 0;
    border: 2px solid #555;
    border-radius: 50%;
    background: radial-gradient(#333 0 5px, #d4d4dc 6px);
}

.navbar {
    position: absolute;
    bottom: 12px;
    left: 50%;
    display: flex;
    align-items: center;
    justify-content: space-between;
    width: 474px;
    height: 48px;
    padding: 0 16px 0 6px;
    background-color: #f2f2f2;
    transform: translateX(-50%);
}

.navbar button {
    gap: 6px;
}

.navbar button:has(.caret) {
    margin-right: -8px;
}

.navbar svg {
    width: 32px;
    height: 32px;
}

.assistant {
    position: absolute;
    right: 27px;
    bottom: 11px;
    width: 33px;
    height: 33px;
    border-radius: 50% 50% 4px 50%;
    background-color: #000;
}

/* timeline */

.footer {
    display: flex;
    align-items: flex-start;
    height: 100px;
    border-top: 5px solid #c9ccd0;
    background-color: #f0f0f0;
}

.playback {
    display: flex;
    align-items: center;
    gap: 24px;
    height: 98px;
    padding-left: 20px;
}

.playback svg {
    width: 26px;
    height: 26px;
    fill: #5c5c5c;
}

.playback .play svg {
    height: 30px;
}

.timeline {
    position: relative;
    padding: 30px 0 0 37px;
}

.features {
    display: flex;
}

.features button {
    width: 48px;
}

.features svg {
    width: 32px;
    height: 32px;
    overflow: visible;
}

.off {
    opacity: .25;
}

.track {
    height: 14px;
    margin: 8px 22px 0 24px;
    border-bottom: 3px solid #c4c4c4;
    background: repeating-linear-gradient(90deg, #c4c4c4 0 3px, transparent 3px 48px);
}

.marker {
    position: absolute;
    top: 19px;
    left: 122px;
}

.settings {
    height: 96px;
    margin: 0 28px 0 auto;
    color: #777;
}
```
FILE: grid.js
```js
// Ground plane grid. Origin of the sketch is at i = 0, j = 5.
const ns = "http://www.w3.org/2000/svg";
const grid = document.getElementById("grid");

function depth(i, j) {
    return 1 - 0.14783 * (i - 1) / 3 - 0.03126 * j / 3;
}

function project(i, j) {
    const s = (i - 1) / 3;
    const t = j / 3;
    const w = depth(i, j);
    const x = (107.9 * s - 619.4 * t + 2925) / w;
    const y = (110.2 * s + 452.7 * t + 517) / w;
    return x.toFixed(1) + " " + y.toFixed(1);
}

function addPath(d, className) {
    const path = document.createElementNS(ns, "path");
    path.setAttribute("d", d);
    path.setAttribute("class", className);
    grid.appendChild(path);
}

function lineI(i) {
    return "M" + project(i, -12) + "L" + project(i, 22);
}

function lineJ(j) {
    return "M" + project(-45, j) + "L" + project(12, j);
}

let major = "";
let minor = "";

for (let n = -225; n <= 60; n++) {
    if (n % 5 !== 0) {
        minor += lineI(n / 5);
    } else if (n !== 0) {
        major += lineI(n / 5);
    }
}

for (let n = -60; n <= 110; n++) {
    if (n % 5 !== 0) {
        minor += lineJ(n / 5);
    } else if (n !== 25) {
        major += lineJ(n / 5);
    }
}

addPath(minor, "minor");
addPath(major, "major");
addPath(lineJ(5), "axis");
```
